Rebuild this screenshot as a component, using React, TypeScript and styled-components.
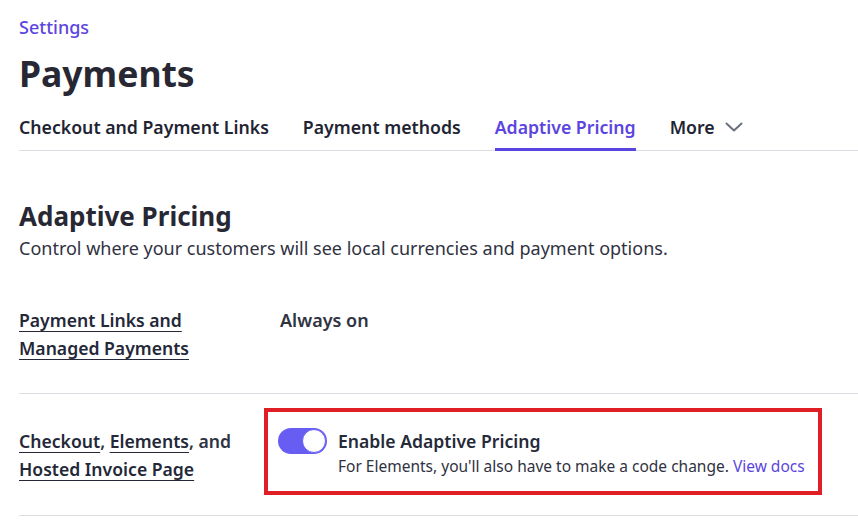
import * as React from 'react';
import styled, { createGlobalStyle } from 'styled-components';

const GlobalStyle = createGlobalStyle`
  body {
    margin: 0;
    background: #ffffff;
    font-family: 'Noto Sans', 'Open Sans', sans-serif;
    color: #262a39;
  }
`;

const Page = styled.div`
  padding: 15px 0 0 19px;
  width: 839px;
`;

const Breadcrumb = styled.a`
  display: block;
  font-size: 18px;
  line-height: 24px;
  font-weight: 500;
  color: #5b45e0;
  text-decoration: none;
`;

const Title = styled.h1`
  margin: 12px 0 0;
  font-size: 35.5px;
  line-height: 44px;
  font-weight: 700;
  color: #272833;
`;

const TabBar = styled.nav`
  display: flex;
  gap: 34px;
  margin-top: 20px;
  border-bottom: 1px solid #dcdee3;
`;

const Tab = styled.div<{ $active?: boolean }>`
  display: flex;
  align-items: center;
  gap: 10px;
  padding-bottom: 9px;
  margin-bottom: -1px;
  font-size: 17.7px;
  line-height: 24px;
  font-weight: 600;
  color: ${(p) => (p.$active ? '#5b45e0' : '#1f2433')};
  border-bottom: 3px solid ${(p) => (p.$active ? '#5b45e0' : 'transparent')};
`;

const SectionTitle = styled.h2`
  margin: 49px 0 0;
  font-size: 26px;
  line-height: 32px;
  font-weight: 700;
  color: #272833;
`;

const Description = styled.p`
  margin: 4px 0 0;
  font-size: 18px;
  line-height: 24px;
  color: #30323f;
`;

const Row = styled.div<{ $first?: boolean }>`
  display: grid;
  grid-template-columns: 261px 1fr;
  padding: ${(p) => (p.$first ? '46px 0 31px' : '33px 0 32px')};
  border-bottom: 1px solid #dcdee3;
`;

const Label = styled.div`
  font-size: 17.6px;
  line-height: 28px;
  font-weight: 600;
  color: #303342;
`;

const LabelLink = styled.a`
  color: #242838;
  text-decoration: underline;
  text-underline-offset: 4px;
  text-decoration-thickness: 1px;
`;

const Value = styled.div`
  font-size: 18px;
  line-height: 28px;
  font-weight: 600;
  color: #303342;
`;

const SettingCell = styled.div`
  position: relative;
  display: flex;
  align-items: flex-start;
  gap: 11px;
  margin-left: -2px;
`;

const Toggle = styled.div<{ $on?: boolean }>`
  flex: none;
  position: relative;
  width: 49px;
  height: 26px;
  margin-top: 1px;
  border-radius: 13px;
  background: ${(p) => (p.$on ? '#675df3' : '#d5d8de')};
`;

const Knob = styled.div<{ $on?: boolean }>`
  position: absolute;
  top: 1px;
  left: ${(p) => (p.$on ? '24px' : '1px')};
  width: 24px;
  height: 24px;
  box-sizing: border-box;
  border-radius: 50%;
  background: #ffffff;
  border: 1.5px solid #675df3;
`;

const SettingText = styled.div`
  display: flex;
  flex-direction: column;
`;

const SettingTitle = styled.div`
  font-size: 17.6px;
  line-height: 28px;
  font-weight: 600;
  color: #262a39;
`;

const SettingHint = styled.div`
  font-size: 15.5px;
  line-height: 22px;
  color: #30323f;
`;

const DocsLink = styled.a`
  color: #5b45e0;
  text-decoration: none;
`;

const Highlight = styled.div`
  position: absolute;
  top: -19px;
  left: -14px;
  width: 558px;
  height: 87px;
  box-sizing: border-box;
  border: 4px solid #e01e25;
  pointer-events: none;
`;

const Chevron = () => (
  <svg width="18" height="10" viewBox="0 0 18 10" fill="none">
    <path d="M1.5 1.5 9 8.5l7.5-7" stroke="#6b7080" strokeWidth="2" strokeLinecap="round" strokeLinejoin="round" />
  </svg>
);

const App = () => {
  return (
    <Page>
      <GlobalStyle />
      <Breadcrumb>Settings</Breadcrumb>
      <Title>Payments</Title>
      <TabBar>
        <Tab>Checkout and Payment Links</Tab>
        <Tab>Payment methods</Tab>
        <Tab $active>Adaptive Pricing</Tab>
        <Tab>
          More <Chevron />
        </Tab>
      </TabBar>
      <SectionTitle>Adaptive Pricing</SectionTitle>
      <Description>Control where your customers will see local currencies and payment options.</Description>
      <Row $first>
        <Label>
          <LabelLink>Payment Links and</LabelLink>
          <br />
          <LabelLink>Managed Payments</LabelLink>
        </Label>
        <Value>Always on</Value>
      </Row>
      <Row>
        <Label>
          <LabelLink>Checkout</LabelLink>, <LabelLink>Elements</LabelLink>, and
          <br />
          <LabelLink>Hosted Invoice Page</LabelLink>
        </Label>
        <SettingCell>
          <Toggle $on>
            <Knob $on />
          </Toggle>
          <SettingText>
            <SettingTitle>Enable Adaptive Pricing</SettingTitle>
            <SettingHint>
              For Elements, you'll also have to make a code change. <DocsLink>View docs</DocsLink>
            </SettingHint>
          </SettingText>
          <Highlight />
        </SettingCell>
      </Row>
    </Page>
  );
};

export default App;
